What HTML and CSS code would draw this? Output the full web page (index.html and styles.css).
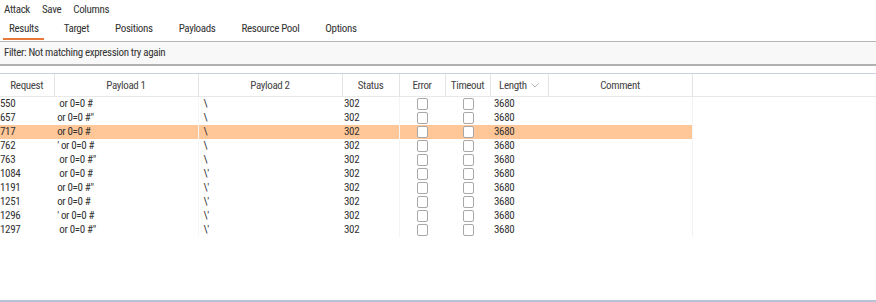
FILE: index.html
```html
<!DOCTYPE html>
<html lang="en">
<head>
  <meta charset="UTF-8">
  <title>Intruder attack</title>
  <link rel="stylesheet" href="styles.css">
</head>
<body>
  <div class="menubar">
    <span class="menu-item">Attack</span>
    <span class="menu-item">Save</span>
    <span class="menu-item">Columns</span>
  </div>

  <div class="tabs">
    <span class="tab active">Results</span>
    <span class="tab">Target</span>
    <span class="tab">Positions</span>
    <span class="tab">Payloads</span>
    <span class="tab">Resource Pool</span>
    <span class="tab">Options</span>
  </div>

  <div class="filter">Filter: Not matching expression try again</div>

  <div class="results">
    <table class="results-table">
      <colgroup>
        <col class="c-req"><col class="c-p1"><col class="c-p2"><col class="c-status">
        <col class="c-error"><col class="c-timeout"><col class="c-length"><col class="c-comment"><col>
      </colgroup>
      <thead>
        <tr>
          <th>Request</th>
          <th>Payload 1</th>
          <th>Payload 2</th>
          <th>Status</th>
          <th>Error</th>
          <th>Timeout</th>
          <th>Length <svg class="sort" width="8" height="5" viewBox="0 0 8 5"><path d="M0.5 0.5 L4 4 L7.5 0.5" fill="none" stroke="#b4b4b4" stroke-width="1"/></svg></th>
          <th>Comment</th>
          <th class="filler"></th>
        </tr>
      </thead>
      <tbody>
        <tr><td>550</td><td class="pl">  or 0=0 #</td><td class="pl2">\</td><td>302</td><td><span class="box"></span></td><td><span class="box"></span></td><td>3680</td><td></td><td class="filler"></td></tr>
        <tr><td>657</td><td class="pl"> or 0=0 #"</td><td class="pl2">\</td><td>302</td><td><span class="box"></span></td><td><span class="box"></span></td><td>3680</td><td></td><td class="filler"></td></tr>
        <tr class="selected"><td>717</td><td class="pl"> or 0=0 #</td><td class="pl2">\</td><td>302</td><td><span class="box"></span></td><td><span class="box"></span></td><td>3680</td><td></td><td class="filler"></td></tr>
        <tr><td>762</td><td class="pl"> ' or 0=0 #</td><td class="pl2">\</td><td>302</td><td><span class="box"></span></td><td><span class="box"></span></td><td>3680</td><td></td><td class="filler"></td></tr>
        <tr><td>763</td><td class="pl">  or 0=0 #"</td><td class="pl2">\</td><td>302</td><td><span class="box"></span></td><td><span class="box"></span></td><td>3680</td><td></td><td class="filler"></td></tr>
        <tr><td>1084</td><td class="pl">  or 0=0 #</td><td class="pl2">\'</td><td>302</td><td><span class="box"></span></td><td><span class="box"></span></td><td>3680</td><td></td><td class="filler"></td></tr>
        <tr><td>1191</td><td class="pl"> or 0=0 #"</td><td class="pl2">\'</td><td>302</td><td><span class="box"></span></td><td><span class="box"></span></td><td>3680</td><td></td><td class="filler"></td></tr>
        <tr><td>1251</td><td class="pl"> or 0=0 #</td><td class="pl2">\'</td><td>302</td><td><span class="box"></span></td><td><span class="box"></span></td><td>3680</td><td></td><td class="filler"></td></tr>
        <tr><td>1296</td><td class="pl"> ' or 0=0 #</td><td class="pl2">\'</td><td>302</td><td><span class="box"></span></td><td><span class="box"></span></td><td>3680</td><td></td><td class="filler"></td></tr>
        <tr><td>1297</td><td class="pl">  or 0=0 #"</td><td class="pl2">\'</td><td>302</td><td><span class="box"></span></td><td><span class="box"></span></td><td>3680</td><td></td><td class="filler"></td></tr>
      </tbody>
    </table>
  </div>
</body>
</html>
```

FILE: styles.css
```css
body {
  margin: 0;
  font-family: 'Liberation Sans Narrow', 'Roboto Condensed', 'Liberation Sans', sans-serif;
  font-size: 11px;
  letter-spacing: -0.35px;
  color: #333;
  background-color: #fff;
  width: 876px;
  height: 302px;
  overflow: hidden;
  display: flex;
  flex-direction: column;
}

.menubar {
  display: flex;
  height: 18px;
  align-items: center;
  padding-left: 4px;
  gap: 12px;
}

.tabs {
  display: flex;
  height: 23px;
  border-bottom: 1px solid #b5b5b5;
  padding-left: 3px;
}

.tab {
  display: flex;
  align-items: center;
  padding: 0 6px;
  margin-right: 14px;
  border-bottom: 2px solid transparent;
  margin-bottom: 1px;
}

.tab.active {
  border-bottom-color: #e8773a;
  padding-right: 5px;
}

.filter {
  height: 22px;
  line-height: 22px;
  padding-left: 4px;
  background-color: #f8f8f8;
  border-bottom: 2px solid #b0b0b0;
}

.results {
  flex: 1;
  margin-top: 7px;
  border-top: 1px solid #c9d0e2;
  border-bottom: 2px solid #b8c2d6;
}

.results-table {
  border-collapse: collapse;
  table-layout: fixed;
  width: 100%;
}

.c-req { width: 54px; }
.c-p1 { width: 144px; }
.c-p2 { width: 144px; }
.c-status { width: 57px; }
.c-error { width: 46px; }
.c-timeout { width: 45px; }
.c-length { width: 58px; }
.c-comment { width: 144px; }

.results-table th {
  height: 22px;
  font-weight: normal;
  color: #444;
  text-align: center;
  border-right: 1px solid #e4e4e4;
  border-bottom: 1px solid #e8e8e8;
  padding: 0;
}

.results-table th.filler {
  border-right: none;
}

.sort {
  margin-left: 2px;
  vertical-align: middle;
}

.results-table td {
  height: 14px;
  padding: 0 0 0 1px;
  white-space: pre;
  line-height: 14px;
}

.results-table td:nth-child(1) { padding-left: 0; }
.results-table td:nth-child(4) { padding-left: 2px; }
.results-table td:nth-child(5),
.results-table td:nth-child(6) { text-align: center; }
.results-table td:nth-child(7) { padding-left: 4px; }
.results-table td:nth-child(8) { border-right: 1px solid #f2f2f2; }
.results-table td:nth-child(2) { border-right: 1px solid #f6f6f6; }
.results-table td:nth-child(4) { border-right: 1px solid #f4f4f4; }

.results-table td.pl { padding-left: 1px; }
.results-table td.pl2 { padding-left: 5px; }

.selected td {
  background-color: #ffc697;
}

.selected td.filler {
  background-color: transparent;
}

.box {
  display: inline-block;
  width: 11px;
  height: 12px;
  border: 1px solid #a8a8a8;
  border-radius: 2px;
  background-color: #fff;
  vertical-align: middle;
  box-sizing: border-box;
}
```
